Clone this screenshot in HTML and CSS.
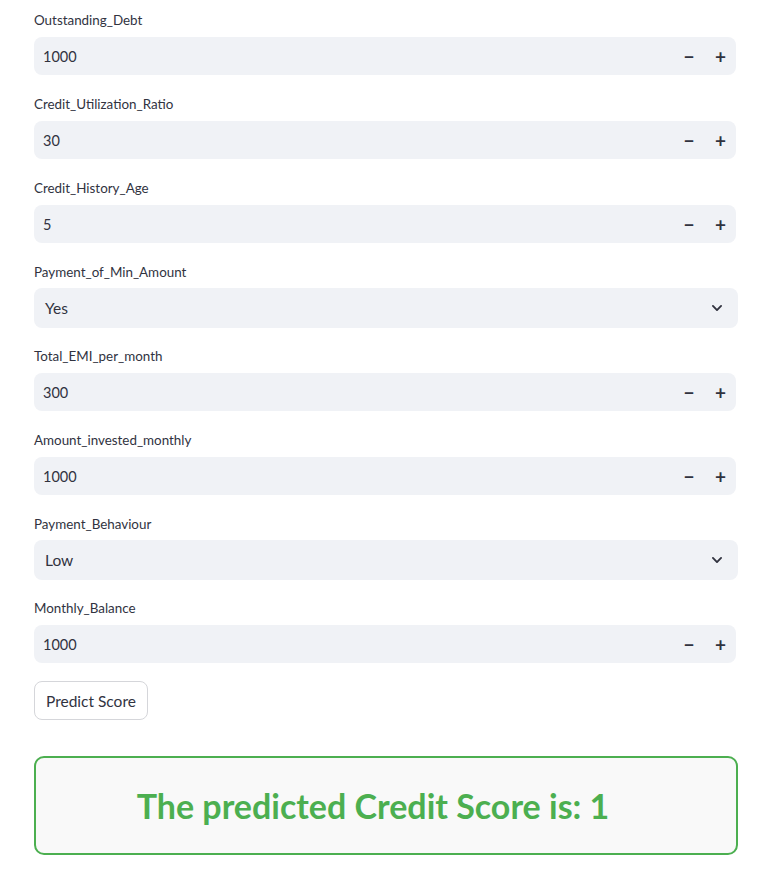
FILE: index.html
```html
<!DOCTYPE html>
<html>
<head>
<meta charset="utf-8">
<link rel="stylesheet" href="styles.css">
</head>
<body>
<main class="page">
  <div class="field">
    <label class="label">Outstanding_Debt</label>
    <div class="num"><span class="val">1000</span><span class="step">&minus;</span><span class="step">+</span></div>
  </div>
  <div class="field">
    <label class="label">Credit_Utilization_Ratio</label>
    <div class="num"><span class="val">30</span><span class="step">&minus;</span><span class="step">+</span></div>
  </div>
  <div class="field">
    <label class="label">Credit_History_Age</label>
    <div class="num"><span class="val">5</span><span class="step">&minus;</span><span class="step">+</span></div>
  </div>
  <div class="field field-sel">
    <label class="label">Payment_of_Min_Amount</label>
    <div class="sel"><span class="val">Yes</span>
      <svg class="chev" width="14" height="14" viewBox="0 0 24 24"><path d="M5 8.5l7 7 7-7" fill="none" stroke="#31333f" stroke-width="3.2" stroke-linecap="round" stroke-linejoin="round"/></svg>
    </div>
  </div>
  <div class="field">
    <label class="label">Total_EMI_per_month</label>
    <div class="num"><span class="val">300</span><span class="step">&minus;</span><span class="step">+</span></div>
  </div>
  <div class="field">
    <label class="label">Amount_invested_monthly</label>
    <div class="num"><span class="val">1000</span><span class="step">&minus;</span><span class="step">+</span></div>
  </div>
  <div class="field field-sel">
    <label class="label">Payment_Behaviour</label>
    <div class="sel"><span class="val">Low</span>
      <svg class="chev" width="14" height="14" viewBox="0 0 24 24"><path d="M5 8.5l7 7 7-7" fill="none" stroke="#31333f" stroke-width="3.2" stroke-linecap="round" stroke-linejoin="round"/></svg>
    </div>
  </div>
  <div class="field">
    <label class="label">Monthly_Balance</label>
    <div class="num"><span class="val">1000</span><span class="step">&minus;</span><span class="step">+</span></div>
  </div>
  <div class="btnrow"><button class="btn">Predict Score</button></div>
  <div class="result"><span class="result-text">The predicted Credit Score is: 1</span></div>
</main>
</body>
</html>
```
FILE: styles.css
```css
html, body { margin: 0; padding: 0; background: #ffffff; }
body {
  font-family: "Source Sans Pro", "Lato", "Noto Sans", sans-serif;
  color: #31333f;
}
.page {
  padding: 8px 40px 0 34px;
  display: flex;
  flex-direction: column;
}
.field {
  display: flex;
  flex-direction: column;
  margin-bottom: 17px;
}
.label {
  height: 24px;
  line-height: 24px;
  font-size: 13.4px;
  margin-bottom: 5px;
  color: #31333f;
}
.num {
  height: 38px;
  background: #f0f2f6;
  border-radius: 8px;
  display: flex;
  align-items: center;
  padding-left: 9px;
  margin-right: 2px;
}
.num .val { flex: 1; font-size: 14.5px; }
.step {
  width: 32px;
  text-align: center;
  font-size: 19px;
  font-weight: 700;
  line-height: 1;
  color: #31333f;
}
.step:last-child { width: 31px; }
.field-sel { margin-bottom: 16px; }
.field-sel .label { margin-bottom: 4px; }
.sel {
  height: 40px;
  background: #f0f2f6;
  border-radius: 8px;
  display: flex;
  align-items: center;
  padding: 0 14px 0 11px;
}
.sel .val { flex: 1; font-size: 15.5px; }
.chev { display: block; }
.btnrow { padding-top: 1px; }
.btn {
  height: 39px;
  padding: 0 11px;
  background: #ffffff;
  border: 1px solid #d5d6da;
  border-radius: 8px;
  font-family: inherit;
  font-size: 15.5px;
  color: #31333f;
}
.result {
  margin-top: 36px;
  height: 95px;
  border: 2px solid #4caf50;
  border-radius: 10px;
  background: #f9f9f9;
  display: flex;
  align-items: center;
  justify-content: center;
}
.result-text {
  font-size: 34px;
  font-weight: 700;
  color: #4caf50;
  margin-right: 26px;
}
```
